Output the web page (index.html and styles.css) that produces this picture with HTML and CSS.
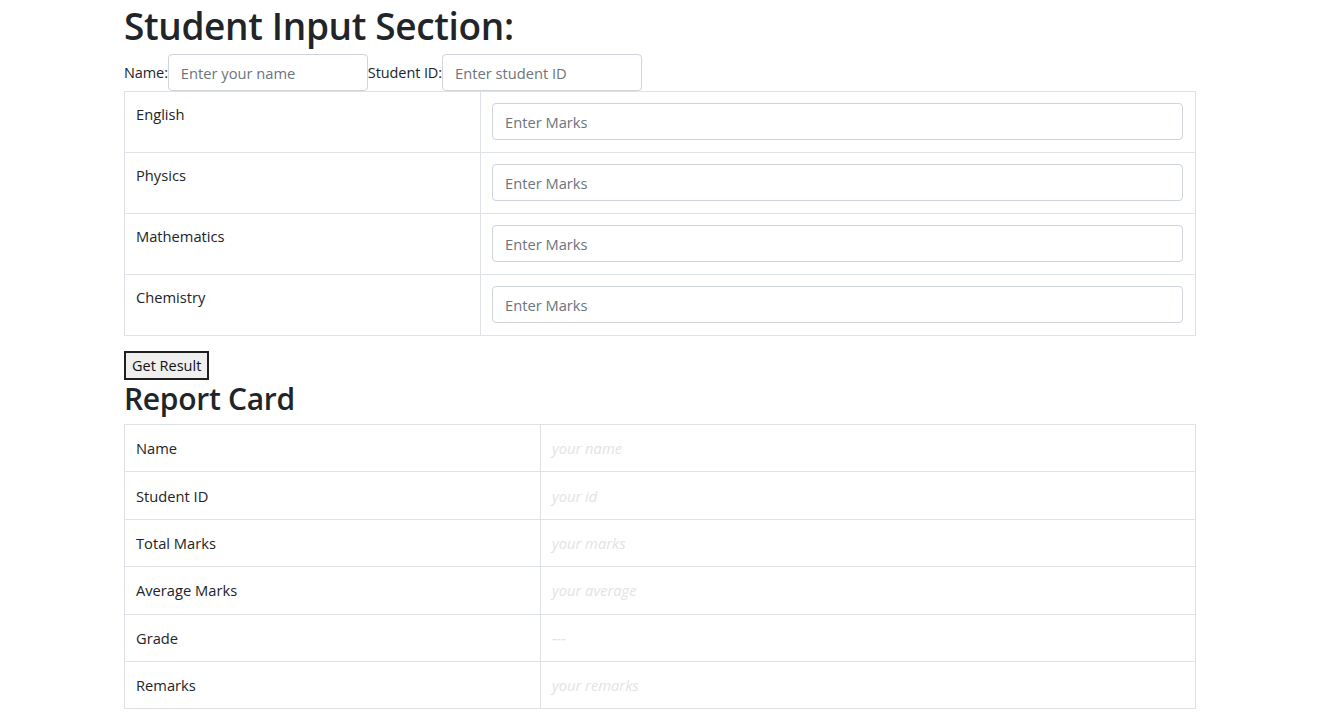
FILE: index.html
```html
<!DOCTYPE html>
<html lang="en">
<head>
<meta charset="utf-8">
<title>Student Result</title>
<link rel="stylesheet" href="styles.css">
</head>
<body>
<div class="page">
  <h1 class="title">Student Input Section:</h1>
  <div class="id-row">
    <label class="lbl">Name:</label><input class="field" type="text" placeholder="Enter your name">
    <label class="lbl">Student ID:</label><input class="field" type="text" placeholder="Enter student ID">
  </div>
  <table class="marks">
    <tr><td class="subj">English</td><td class="mcell"><input class="mark" type="text" placeholder="Enter Marks"></td></tr>
    <tr><td class="subj">Physics</td><td class="mcell"><input class="mark" type="text" placeholder="Enter Marks"></td></tr>
    <tr><td class="subj">Mathematics</td><td class="mcell"><input class="mark" type="text" placeholder="Enter Marks"></td></tr>
    <tr><td class="subj">Chemistry</td><td class="mcell"><input class="mark" type="text" placeholder="Enter Marks"></td></tr>
  </table>
  <button class="btn" type="button">Get Result</button>
  <h2 class="sub">Report Card</h2>
  <table class="report">
    <tr><td class="key">Name</td><td class="val">your name</td></tr>
    <tr><td class="key">Student ID</td><td class="val">your id</td></tr>
    <tr><td class="key">Total Marks</td><td class="val">your marks</td></tr>
    <tr><td class="key">Average Marks</td><td class="val">your average</td></tr>
    <tr><td class="key">Grade</td><td class="val">---</td></tr>
    <tr><td class="key">Remarks</td><td class="val">your remarks</td></tr>
  </table>
</div>
</body>
</html>
```

FILE: styles.css
```css
* { box-sizing: border-box; }
body {
  margin: 0;
  background: #fff;
  color: #212529;
  font-family: "Open Sans", "Noto Sans", sans-serif;
  font-size: 14.7px;
}
.page {
  margin-left: 124px;
  width: 1072px;
}
.title {
  margin: 0;
  padding-top: 2px;
  font-size: 37px;
  font-weight: 600;
  line-height: 48px;
  letter-spacing: -0.35px;
}
.id-row {
  display: flex;
  align-items: center;
  height: 37px;
  margin-top: 4px;
}
.lbl { font-size: 14.5px; letter-spacing: -0.1px; }
.field {
  width: 200px;
  height: 37px;
  border: 1px solid #ced4da;
  border-radius: 4px;
  padding: 0 12px;
  font-family: inherit;
  font-size: 14.7px;
  color: #495057;
}
.field::placeholder, .mark::placeholder { color: #6c757d; }
table {
  width: 1072px;
  border-collapse: collapse;
}
td {
  border: 1px solid #dee2e6;
  vertical-align: top;
  padding: 12px;
}
.marks td { height: 61px; }
.subj { width: 356px; padding: 11px 12px 12px 11px; line-height: 22px; }
.mcell { padding: 11px 12px 11px 11px; }
.mark {
  display: block;
  width: 100%;
  height: 37px;
  border: 1px solid #ced4da;
  border-radius: 4px;
  padding: 0 12px;
  font-family: inherit;
  font-size: 14.7px;
}
.btn {
  display: block;
  margin-top: 15px;
  height: 29px;
  padding: 0 6px;
  background: #efefef;
  border: 2px solid #1f1f1f;
  border-radius: 0;
  font-family: inherit;
  font-size: 14.5px;
  color: #111;
}
.sub {
  margin: 0;
  font-size: 30px;
  font-weight: 600;
  line-height: 38px;
  margin-bottom: 6px;
  letter-spacing: -0.3px;
}
.report td { height: 47.4px; vertical-align: middle; line-height: 22px; padding: 0 12px 0 11px; }
.key { width: 416px; }
.val { color: #e3e3e3; font-style: italic; }
```
